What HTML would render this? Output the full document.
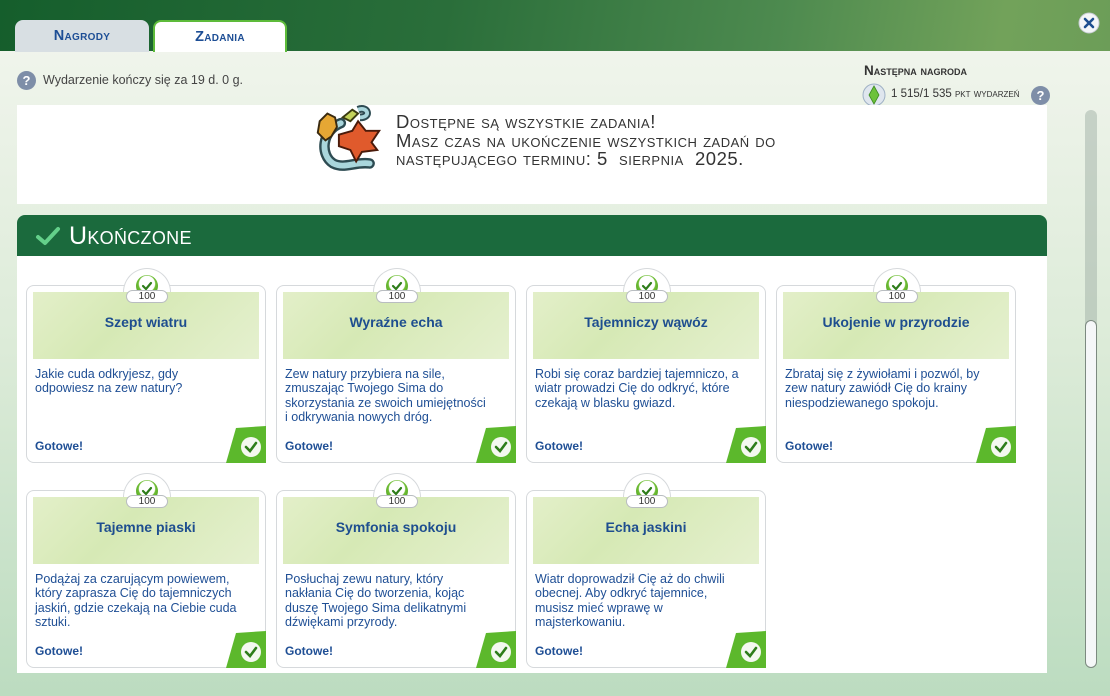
<!DOCTYPE html>
<html><head><meta charset="utf-8">
<style>
*{margin:0;padding:0;box-sizing:border-box}
body{width:1110px;height:696px;overflow:hidden;position:relative;font-family:"Liberation Sans",sans-serif;background:linear-gradient(180deg,#f3f6ef 0%,#dcebd8 50%,#bcdcc0 100%)}
.top{position:absolute;left:0;top:0;width:1110px;height:51px;background:linear-gradient(100deg,#155e2c 0%,#2a6e3a 40%,#4d8a4f 70%,#72a25a 90%,#6c9d58 100%)}
.tab{position:absolute;top:20px;height:32px;border-radius:8px 8px 0 0;text-align:center;font-weight:bold;color:#1d4e95;font-size:14.5px;font-variant:small-caps;line-height:32px;letter-spacing:.3px}
.sc{font-variant:small-caps}
.q{position:absolute;width:19px;height:19px;border-radius:50%;background:#7e8ea8;color:#fff;font-weight:bold;font-size:13px;text-align:center;line-height:19px}
.white{position:absolute;background:#fff}
.card{position:absolute;width:240px;height:178px;border:1px solid #d6d9dc;border-radius:8px;background:#fff}
.bump{position:absolute;left:96px;top:-18px;width:48px;height:40px;border:1px solid #d6d9dc;border-bottom:none;border-radius:24px 24px 0 0;background:#fff}
.hd{position:absolute;left:6px;top:6px;width:226px;height:67px;background:linear-gradient(135deg,#e3efc9 0%,#d6e9b5 40%,#e5f0cf 100%);text-align:center;font-weight:bold;font-size:14px;color:#1e4e8f;padding-top:22px}
.ic{position:absolute;left:109px;top:-11px;width:22px;height:22px;border-radius:50%;background:radial-gradient(circle at 50% 40%,#fff 45%,#6fbe34 50%,#3c8d1e 100%)}
.pill{position:absolute;left:99px;top:4px;width:42px;height:13px;border:1px solid #b9bdc1;border-radius:7px;background:#fff;font-size:10px;color:#333;text-align:center;line-height:11px}
.tx{position:absolute;left:8px;top:81px;width:206px;font-size:12.5px;line-height:14.3px;color:#1f4f95}
.go{position:absolute;left:8px;top:153px;font-weight:bold;font-size:12px;color:#1f4f95}
.cor{position:absolute;right:-1px;bottom:-1px;width:40px;height:37px}
</style></head><body>
<div class="top"></div>
<div class="tab" style="left:15px;width:134px;background:#d8dfe3">Nagrody</div>
<div class="tab" style="left:153px;width:134px;background:#fff;border:2px solid #5dbb3a;border-bottom:none;line-height:30px">Zadania</div>
<svg style="position:absolute;left:1078px;top:12px" width="22" height="22"><circle cx="11" cy="11" r="10" fill="#f4f6f8" stroke="#c7ccd3"/><path d="M7 7L15 15M15 7L7 15" stroke="#1e4e8f" stroke-width="2.6" stroke-linecap="round"/></svg>
<div class="q" style="left:17px;top:71px">?</div>
<div style="position:absolute;left:43px;top:73px;font-size:12.5px;color:#444">Wydarzenie kończy się za 19 d. 0 g.</div>
<div style="position:absolute;left:864px;top:63px;font-size:13.5px;font-weight:bold;color:#333" class="sc">Następna nagroda</div>
<svg style="position:absolute;left:862px;top:83px" width="24" height="24"><circle cx="12" cy="12" r="11" fill="#dfe6ee" stroke="#9fb1c5"/><path d="M12 3L17 12L12 21L7 12Z" fill="#6cc23a" stroke="#3e8b22" stroke-width=".8"/></svg>
<div style="position:absolute;left:891px;top:88px;font-size:11.5px;color:#333;white-space:nowrap" class="sc">1 515/1 535 pkt wydarzeń</div>
<div class="q" style="left:1031px;top:86px">?</div>
<div class="white" style="left:17px;top:105px;width:1030px;height:99px"></div>
<svg style="position:absolute;left:312px;top:102px" width="72" height="72" viewBox="0 0 75 75">
<path d="M30 22C10 30 8 55 22 64C34 70 44 62 60 64" fill="none" stroke="#2d4b52" stroke-width="11" stroke-linecap="round"/>
<path d="M30 22C10 30 8 55 22 64C34 70 44 62 60 64" fill="none" stroke="#a9d6dc" stroke-width="6" stroke-linecap="round"/>
<path d="M48 8C58 4 62 16 50 16" fill="none" stroke="#2d4b52" stroke-width="8"/>
<path d="M48 8C58 4 62 16 50 16" fill="none" stroke="#a9d6dc" stroke-width="4"/>
<path d="M8 20L16 12L24 16L26 26L20 36L14 40L6 32Z" fill="#e6a734" stroke="#3a2a10" stroke-width="2"/>
<path d="M32 16L42 8L48 12L40 20Z" fill="#c3d25a" stroke="#3a3a10" stroke-width="2"/>
<path d="M28 34L42 30L48 20L56 30L70 30L62 42L68 50L52 52L46 62L40 50L28 46Z" fill="#e05a2c" stroke="#4a1a0a" stroke-width="2"/>
</svg>
<div style="position:absolute;left:396px;top:113px;font-size:18.5px;line-height:18.5px;color:#333;letter-spacing:.5px" class="sc">Dostępne są wszystkie zadania!<br>Masz czas na ukończenie wszystkich zadań do<br>następującego terminu: 5 &nbsp;sierpnia &nbsp;2025.</div>
<div style="position:absolute;left:17px;top:215px;width:1030px;height:41px;background:#1b6a3d;border-radius:8px 8px 0 0"></div>
<svg style="position:absolute;left:35px;top:226px" width="26" height="20"><path d="M3 11L10 17L23 3" fill="none" stroke="#64d08a" stroke-width="4" stroke-linecap="round" stroke-linejoin="round"/></svg>
<div style="position:absolute;left:69px;top:222px;font-size:25px;color:#fff;letter-spacing:.3px" class="sc">Ukończone</div>
<div class="white" style="left:17px;top:256px;width:1030px;height:417px"></div>
<div style="position:absolute;left:1085px;top:110px;width:12px;height:558px;border-radius:6px;background:rgba(160,175,165,.5)"></div>
<div style="position:absolute;left:1085px;top:320px;width:12px;height:348px;border-radius:6px;background:#f5f7f8;border:1px solid #7c8a80"></div>
<div id="cards"></div>
<script>
var d=[["Szept wiatru","Jakie cuda odkryjesz, gdy<br>odpowiesz na zew natury?"],["Wyraźne echa","Zew natury przybiera na sile, zmuszając Twojego Sima do skorzystania ze swoich umiejętności i odkrywania nowych dróg."],["Tajemniczy wąwóz","Robi się coraz bardziej tajemniczo, a wiatr prowadzi Cię do odkryć, które czekają w blasku gwiazd."],["Ukojenie w przyrodzie","Zbrataj się z żywiołami i pozwól, by zew natury zawiódł Cię do krainy niespodziewanego spokoju."],["Tajemne piaski","Podążaj za czarującym powiewem, który zaprasza Cię do tajemniczych jaskiń, gdzie czekają na Ciebie cuda sztuki."],["Symfonia spokoju","Posłuchaj zewu natury, który nakłania Cię do tworzenia, kojąc duszę Twojego Sima delikatnymi dźwiękami przyrody."],["Echa jaskini","Wiatr doprowadził Cię aż do chwili obecnej. Aby odkryć tajemnice, musisz mieć wprawę w majsterkowaniu."]];
var h="";
d.forEach(function(c,i){var L=26+(i%4)*250,T=i<4?285:490;
h+='<div class="card" style="left:'+L+'px;top:'+T+'px"><div class="bump"></div><div class="hd">'+c[0]+'</div><div class="ic"></div><svg style="position:absolute;left:112px;top:-8px" width="16" height="16"><path d="M4 8L7 11L12 5" fill="none" stroke="#2e7d1a" stroke-width="2.2" stroke-linecap="round"/></svg><div class="pill">100</div><div class="tx">'+c[1]+'</div><div class="go">Gotowe!</div><svg class="cor" viewBox="0 0 40 37"><path d="M10 2L40 0L40 37L0 37Z" fill="#5cb82c"/><circle cx="25" cy="21" r="10" fill="#f4f8f0"/><path d="M20 21L24 25L30 17" fill="none" stroke="#2e7d1a" stroke-width="2.6" stroke-linecap="round"/></svg></div>';});
document.getElementById("cards").innerHTML=h;
</script>
</body></html>
